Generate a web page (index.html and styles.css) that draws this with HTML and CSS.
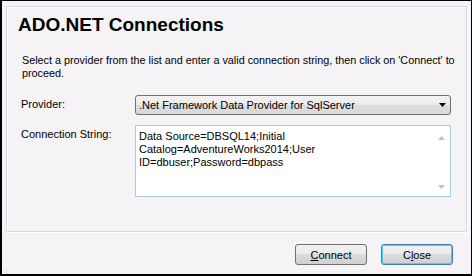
FILE: index.html
```html
<!DOCTYPE html>
<html>
<head>
<meta charset="utf-8">
<link rel="stylesheet" href="styles.css">
</head>
<body>
<div class="dialog">
  <div class="panel">
    <h1 class="title">ADO.NET Connections</h1>
    <p class="desc">Select a provider from the list and enter a valid connection string, then click on 'Connect' to proceed.</p>
    <div class="form">
      <div class="label label-provider">Provider:</div>
      <div class="select">
        <span class="select-text">.Net Framework Data Provider for SqlServer</span>
        <svg class="select-arrow" width="7" height="4" viewBox="0 0 7 4"><path d="M0 0H7L3.5 4Z" fill="#000"/></svg>
      </div>
      <div class="label label-conn">Connection String:</div>
      <div class="textarea">
        <div class="textarea-text">Data Source=DBSQL14;Initial<br>Catalog=AdventureWorks2014;User<br>ID=dbuser;Password=dbpass</div>
        <div class="scrollbar">
          <svg width="7" height="4" viewBox="0 0 7 4"><path d="M0 4H7L3.5 0Z" fill="#c4c4c4"/></svg>
          <svg width="7" height="4" viewBox="0 0 7 4"><path d="M0 0H7L3.5 4Z" fill="#c4c4c4"/></svg>
        </div>
      </div>
    </div>
  </div>
  <div class="buttons">
    <button class="btn"><u>C</u>onnect</button>
    <button class="btn btn-default">C<u>l</u>ose</button>
  </div>
  <div class="footer-edge"></div>
</div>
</body>
</html>
```
FILE: styles.css
```css
html, body {
  margin: 0;
  padding: 0;
}
body {
  width: 472px;
  height: 276px;
  overflow: hidden;
  font-family: "Liberation Sans", Arial, sans-serif;
  color: #000;
}
.dialog {
  box-sizing: border-box;
  width: 472px;
  height: 276px;
  background: #f6f3f6;
  border-top: 1px solid #000;
  border-left: 2px solid #000;
  border-right: 1px solid #000;
  border-bottom: 2px solid #000;
  display: flex;
  flex-direction: column;
}
.panel {
  box-sizing: border-box;
  margin: 5px 0 0 4px;
  width: 461px;
  height: 226px;
  border: 1px solid #d3dbe2;
  box-shadow: inset 1px 1px 0 #ffffff, 1px 1px 0 #ffffff;
  padding: 7px 0 0 14px;
}
.title {
  margin: 0 0 0 -3px;
  font-size: 19px;
  line-height: 22px;
  font-weight: bold;
}
.desc {
  margin: 18px 0 0 1px;
  width: 442px;
  font-size: 10.8px;
  line-height: 13px;
}
.form {
  margin-top: 15px;
  display: grid;
  grid-template-columns: 114px 316px;
  row-gap: 10px;
}
.label {
  font-size: 11px;
  line-height: 13px;
  padding-top: 3px;
}
.select {
  box-sizing: border-box;
  height: 20px;
  border: 1px solid #707070;
  border-radius: 3px;
  background: linear-gradient(#f3f3f3, #ebebeb 50%, #dedede 51%, #d8d8d8);
  display: flex;
  align-items: center;
  padding: 0 0 0 3px;
  font-size: 11px;
}
.select-text {
  flex: 1;
}
.select-arrow {
  margin-right: 4px;
}
.textarea {
  box-sizing: border-box;
  height: 72px;
  border: 1px solid #a9cbe6;
  background: #fff;
  display: flex;
  padding: 4px 0 0 3px;
}
.textarea-text {
  flex: 1;
  font-size: 11px;
  line-height: 13px;
}
.scrollbar {
  width: 17px;
  display: flex;
  flex-direction: column;
  justify-content: space-between;
  align-items: center;
  padding: 6px 0 7px;
}
.buttons {
  display: flex;
  justify-content: flex-end;
  gap: 14px;
  margin: 12px 18px 0 0;
}
.btn {
  box-sizing: border-box;
  width: 72px;
  height: 21px;
  border: 1px solid #707070;
  border-radius: 3px;
  background: linear-gradient(#f2f2f2, #ebebeb 45%, #dddddd 50%, #cfcfcf);
  font-family: "Liberation Sans", Arial, sans-serif;
  font-size: 11px;
  padding: 0;
  color: #000;
}
.btn-default {
  border-color: #3c7fb1;
  box-shadow: inset 0 0 0 1px #48d2fb;
}
.footer-edge {
  margin: 5px 0 0 4px;
  width: 1px;
  flex: 1;
  background: #d3dbe2;
}
```
